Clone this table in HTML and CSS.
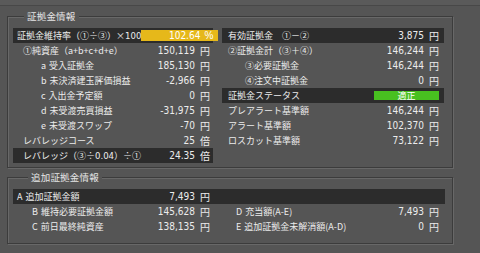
FILE: index.html
```html
<!DOCTYPE html>
<html lang="ja">
<head>
<meta charset="utf-8">
<link rel="stylesheet" href="styles.css">
</head>
<body>
<div class="topbar"></div>
<fieldset class="group g1">
  <legend>証拠金情報</legend>
  <div class="cols">
    <div class="col">
      <div class="row hl first">
        <span class="lbl">証拠金維持率（①÷③）×<span class="num">100</span></span>
        <span class="ratio"><span class="num">102.64</span><span class="pct">%</span></span>
      </div>
      <div class="row in1"><span class="lbl">①純資産（a+b+c+d+e）</span><span class="val"><span class="num">150,119</span><span class="unit">円</span></span></div>
      <div class="row in2"><span class="lbl">a 受入証拠金</span><span class="val"><span class="num">185,130</span><span class="unit">円</span></span></div>
      <div class="row in2"><span class="lbl">b 未決済建玉評価損益</span><span class="val"><span class="num">-2,966</span><span class="unit">円</span></span></div>
      <div class="row in2"><span class="lbl">c 入出金予定額</span><span class="val"><span class="num">0</span><span class="unit">円</span></span></div>
      <div class="row in2"><span class="lbl">d 未受渡売買損益</span><span class="val"><span class="num">-31,975</span><span class="unit">円</span></span></div>
      <div class="row in2"><span class="lbl">e 未受渡スワップ</span><span class="val"><span class="num">-70</span><span class="unit">円</span></span></div>
      <div class="row in1"><span class="lbl">レバレッジコース</span><span class="val"><span class="num">25</span><span class="unit">倍</span></span></div>
      <div class="row hl in1"><span class="lbl">レバレッジ（③÷<span class="num">0.04</span>）÷①</span><span class="val"><span class="num">24.35</span><span class="unit">倍</span></span></div>
    </div>
    <div class="col right">
      <div class="row hl in1r"><span class="lbl">有効証拠金　①－②</span><span class="val"><span class="num">3,875</span><span class="unit">円</span></span></div>
      <div class="row in1r"><span class="lbl">②証拠金計（③＋④）</span><span class="val"><span class="num">146,244</span><span class="unit">円</span></span></div>
      <div class="row in2r"><span class="lbl">③必要証拠金</span><span class="val"><span class="num">146,244</span><span class="unit">円</span></span></div>
      <div class="row in2r"><span class="lbl">④注文中証拠金</span><span class="val"><span class="num">0</span><span class="unit">円</span></span></div>
      <div class="row hl in1r"><span class="lbl">証拠金ステータス</span><span class="status">適正</span></div>
      <div class="row in1r"><span class="lbl">プレアラート基準額</span><span class="val"><span class="num">146,244</span><span class="unit">円</span></span></div>
      <div class="row in1r"><span class="lbl">アラート基準額</span><span class="val"><span class="num">102,370</span><span class="unit">円</span></span></div>
      <div class="row in1r"><span class="lbl">ロスカット基準額</span><span class="val"><span class="num">73,122</span><span class="unit">円</span></span></div>
    </div>
  </div>
</fieldset>
<fieldset class="group g2">
  <legend>追加証拠金情報</legend>
  <div class="hl wide">
    <div class="cols">
      <div class="row first"><span class="lbl">A 追加証拠金額</span><span class="val"><span class="num">7,493</span><span class="unit">円</span></span></div>
    </div>
  </div>
  <div class="cols">
    <div class="col">
      <div class="row inb"><span class="lbl">B 維持必要証拠金額</span><span class="val"><span class="num">145,628</span><span class="unit">円</span></span></div>
      <div class="row inb"><span class="lbl">C 前日最終純資産</span><span class="val"><span class="num">138,135</span><span class="unit">円</span></span></div>
    </div>
    <div class="col right">
      <div class="row ind"><span class="lbl">D 充当額(A-E)</span><span class="val"><span class="num">7,493</span><span class="unit">円</span></span></div>
      <div class="row ind"><span class="lbl">E 追加証拠金未解消額(A-D)</span><span class="val"><span class="num">0</span><span class="unit">円</span></span></div>
    </div>
  </div>
</fieldset>
</body>
</html>
```

FILE: styles.css
```css
html, body {
  margin: 0;
  padding: 0;
  background: #555555;
}
body {
  width: 480px;
  height: 253px;
  overflow: hidden;
  font-family: "Noto Sans CJK JP", "Noto Sans", sans-serif;
  font-size: 10px;
  color: #ececec;
}
.topbar {
  height: 5px;
  background: #5a5a5a;
  border-bottom: 1px solid #484848;
}
.group {
  margin: 0 0 0 7px;
  width: 446px;
  box-sizing: border-box;
  border: 1px solid #3c3c3c;
  box-shadow: inset 1px 1px 0 #686868, 1px 1px 0 #686868;
  padding: 0 7px 0 5px;
}
.group legend {
  font-size: 9.5px;
  line-height: 15px;
  padding: 0 3px;
  background: #555555;
  color: #e6e6e6;
  letter-spacing: 0.2px;
}
.g1 {
  margin-top: 3px;
  padding-top: 4px;
  padding-bottom: 3px;
  height: 159px;
}
.g1 legend { margin-left: 11px; }
.g2 {
  margin-top: 2px;
  padding-top: 4px;
  height: 74px;
}
.g2 legend { margin-left: 15px; }
.cols {
  display: grid;
  grid-template-columns: 200px 222px;
  column-gap: 9px;
}
.col {
  display: flex;
  flex-direction: column;
}
.row {
  height: 15px;
  line-height: 15px;
  display: flex;
  align-items: center;
  justify-content: space-between;
  white-space: nowrap;
  padding-right: 3px;
}
.col.right .row { padding-right: 5px; }
.hl {
  background: #2c2c2c;
}
.lbl {
  font-size: 9px;
  word-spacing: 1px;
}
.lbl .num {
  font-size: 9.5px;
}
.num {
  font-family: "Liberation Sans Narrow", "DejaVu Sans Condensed", "Liberation Sans", sans-serif;
  font-size: 10px;
}
.val {
  display: flex;
  align-items: center;
  flex-shrink: 0;
}
.unit {
  margin-left: 5px;
}
.first { padding-left: 4px; }
.in1 { padding-left: 10px; }
.in2 { padding-left: 28px; }
.in1r { padding-left: 6px; }
.in2r { padding-left: 23px; }
.inb { padding-left: 19px; }
.ind { padding-left: 14px; }
.row.hl.first { padding-right: 0; }
.ratio {
  flex-shrink: 0;
  width: 77px;
  height: 11px;
  line-height: 11px;
  background: #e6b81a;
  color: #ffffff;
  display: flex;
  justify-content: flex-end;
  align-items: center;
  padding-right: 5px;
  box-sizing: border-box;
}
.pct {
  font-family: "Liberation Sans Narrow", "Liberation Sans", sans-serif;
  margin-left: 4px;
}
.status {
  flex-shrink: 0;
  width: 65px;
  height: 9px;
  line-height: 9px;
  background: #48c020;
  color: #ffffff;
  text-align: center;
  font-size: 9px;
}
.wide {
  display: block;
}
```
